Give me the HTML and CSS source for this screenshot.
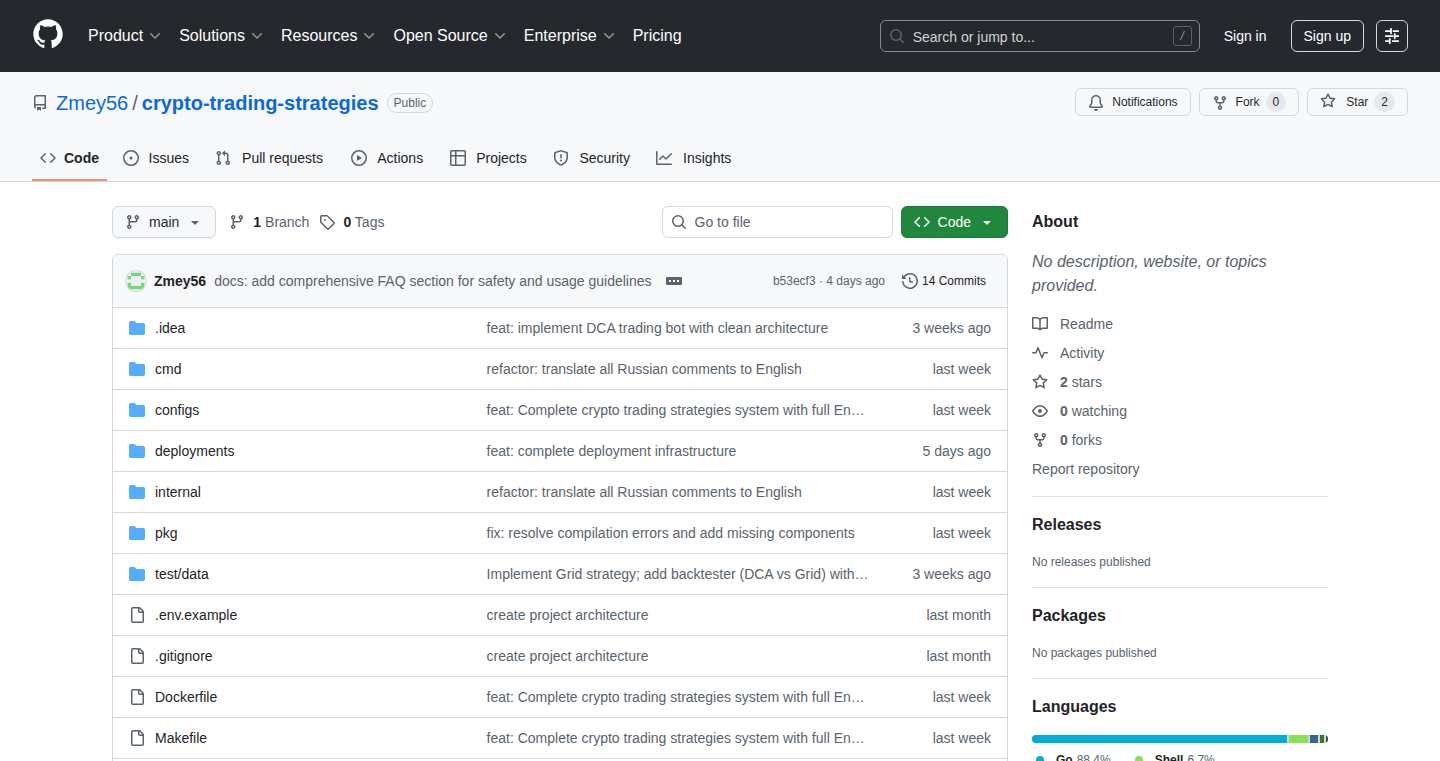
FILE: index.html
```html
<!DOCTYPE html>
<html lang="en">
<head>
<meta charset="utf-8">
<meta name="viewport" content="width=device-width, initial-scale=1">
<title>Zmey56/crypto-trading-strategies</title>
<link rel="stylesheet" href="styles.css">
</head>
<body>
<svg class="sprite" aria-hidden="true">
  <symbol id="i-mark" viewBox="0 0 24 24"><path d="M12 1C5.9225 1 1 5.9225 1 12C1 16.8675 4.14875 20.9787 8.52125 22.4362C9.07125 22.5325 9.2775 22.2025 9.2775 21.9137C9.2775 21.6525 9.26375 20.7862 9.26375 19.865C6.5 20.3737 5.785 19.1912 5.565 18.5725C5.44125 18.2562 4.905 17.28 4.4375 17.0187C4.0525 16.8125 3.5025 16.3037 4.42375 16.29C5.29 16.2762 5.90875 17.0875 6.115 17.4175C7.105 19.0812 8.68625 18.6137 9.31875 18.325C9.415 17.61 9.70375 17.1287 10.02 16.8537C7.5725 16.5787 5.015 15.63 5.015 11.4225C5.015 10.2262 5.44125 9.23625 6.1425 8.46625C6.0325 8.19125 5.6475 7.06375 6.2525 5.55125C6.2525 5.55125 7.17375 5.2625 9.2775 6.67875C10.1575 6.43125 11.0925 6.3075 12.0275 6.3075C12.9625 6.3075 13.8975 6.43125 14.7775 6.67875C16.8813 5.24875 17.8025 5.55125 17.8025 5.55125C18.4075 7.06375 18.0225 8.19125 17.9125 8.46625C18.6138 9.23625 19.04 10.2125 19.04 11.4225C19.04 15.6437 16.4688 16.5787 14.0213 16.8537C14.42 17.1975 14.7638 17.8575 14.7638 18.8887C14.7638 20.36 14.75 21.5425 14.75 21.9137C14.75 22.2025 14.9563 22.5462 15.5063 22.4362C19.8513 20.9787 23 16.8537 23 12C23 5.9225 18.0775 1 12 1Z"/></symbol>
  <symbol id="i-chevron" viewBox="0 0 16 16"><path d="M12.78 5.22a.749.749 0 0 1 0 1.06l-4.25 4.25a.749.749 0 0 1-1.06 0L3.22 6.28a.749.749 0 1 1 1.06-1.06L8 8.939l3.72-3.719a.749.749 0 0 1 1.06 0Z"/></symbol>
  <symbol id="i-search" viewBox="0 0 16 16"><path d="M10.68 11.74a6 6 0 0 1-7.922-8.982 6 6 0 0 1 8.982 7.922l3.04 3.04a.749.749 0 0 1-.326 1.275.749.749 0 0 1-.734-.215ZM11.5 7a4.499 4.499 0 1 0-8.997 0A4.499 4.499 0 0 0 11.5 7Z"/></symbol>
  <symbol id="i-sliders" viewBox="0 0 16 16"><path d="M1.75 3h4.5M7 .75v4.5M9.5 3h4.75M1.75 8h7M10.75 5.75v4.5M11 8h3.25M1.75 13h2.5M5.75 10.75v4.5M8.75 13h5.5" fill="none" stroke="currentColor" stroke-width="1.75" stroke-linecap="round"/></symbol>
  <symbol id="i-repo" viewBox="0 0 16 16"><path d="M2 2.5A2.5 2.5 0 0 1 4.5 0h8.75a.75.75 0 0 1 .75.75v12.5a.75.75 0 0 1-.75.75h-2.5a.75.75 0 0 1 0-1.5h1.75v-2h-8a1 1 0 0 0-.714 1.7.75.75 0 1 1-1.072 1.05A2.495 2.495 0 0 1 2 11.5Zm10.5-1h-8a1 1 0 0 0-1 1v6.708A2.486 2.486 0 0 1 4.5 9h8ZM5 12.25a.25.25 0 0 1 .25-.25h3.5a.25.25 0 0 1 .25.25v3.25a.25.25 0 0 1-.4.2l-1.45-1.087a.249.249 0 0 0-.3 0L5.4 15.7a.25.25 0 0 1-.4-.2Z"/></symbol>
  <symbol id="i-code" viewBox="0 0 16 16"><path d="m11.28 3.22 4.25 4.25a.75.75 0 0 1 0 1.06l-4.25 4.25a.749.749 0 0 1-1.275-.326.749.749 0 0 1 .215-.734L13.94 8l-3.72-3.72a.749.749 0 0 1 .326-1.275.749.749 0 0 1 .734.215Zm-6.56 0a.751.751 0 0 1 1.042.018.751.751 0 0 1 .018 1.042L2.06 8l3.72 3.72a.749.749 0 0 1-.326 1.275.749.749 0 0 1-.734-.215L.47 8.53a.75.75 0 0 1 0-1.06Z"/></symbol>
  <symbol id="i-issue" viewBox="0 0 16 16"><path d="M8 9.5a1.5 1.5 0 1 0 0-3 1.5 1.5 0 0 0 0 3Z"/><path d="M8 0a8 8 0 1 1 0 16A8 8 0 0 1 8 0ZM1.5 8a6.5 6.5 0 1 0 13 0 6.5 6.5 0 0 0-13 0Z"/></symbol>
  <symbol id="i-pr" viewBox="0 0 16 16"><path d="M1.5 3.25a2.25 2.25 0 1 1 3 2.122v5.256a2.251 2.251 0 1 1-1.5 0V5.372A2.25 2.25 0 0 1 1.5 3.25Zm5.677-.177L9.573.677A.25.25 0 0 1 10 .854V2.5h1A2.5 2.5 0 0 1 13.5 5v5.628a2.251 2.251 0 1 1-1.5 0V5a1 1 0 0 0-1-1h-1v1.646a.25.25 0 0 1-.427.177L7.177 3.427a.25.25 0 0 1 0-.354ZM3.75 2.5a.75.75 0 1 0 0 1.5.75.75 0 0 0 0-1.5Zm0 9.5a.75.75 0 1 0 0 1.5.75.75 0 0 0 0-1.5Zm8.25.75a.75.75 0 1 0 1.5 0 .75.75 0 0 0-1.5 0Z"/></symbol>
  <symbol id="i-play" viewBox="0 0 16 16"><path d="M8 0a8 8 0 1 1 0 16A8 8 0 0 1 8 0ZM1.5 8a6.5 6.5 0 1 0 13 0 6.5 6.5 0 0 0-13 0Zm4.879-2.773 4.264 2.559a.25.25 0 0 1 0 .428l-4.264 2.559A.25.25 0 0 1 6 10.559V5.442a.25.25 0 0 1 .379-.215Z"/></symbol>
  <symbol id="i-table" viewBox="0 0 16 16"><path d="M0 1.75C0 .784.784 0 1.75 0h12.5C15.216 0 16 .784 16 1.75v12.5A1.75 1.75 0 0 1 14.25 16H1.75A1.75 1.75 0 0 1 0 14.25ZM6.5 6.5v8h7.75a.25.25 0 0 0 .25-.25V6.5Zm8-1.5V1.75a.25.25 0 0 0-.25-.25H6.5V5Zm-13 1.5v7.75c0 .138.112.25.25.25H5v-8ZM5 5V1.5H1.75a.25.25 0 0 0-.25.25V5Z"/></symbol>
  <symbol id="i-shield" viewBox="0 0 16 16"><path d="M7.467.133a1.748 1.748 0 0 1 1.066 0l5.25 1.68A1.75 1.75 0 0 1 15 3.48V7c0 1.566-.32 3.182-1.303 4.682-.983 1.498-2.585 2.813-5.032 3.855a1.697 1.697 0 0 1-1.33 0c-2.447-1.042-4.049-2.357-5.032-3.855C1.32 10.182 1 8.566 1 7V3.48a1.755 1.755 0 0 1 1.217-1.667Zm.61 1.429a.25.25 0 0 0-.153 0l-5.25 1.68a.25.25 0 0 0-.174.238V7c0 1.358.275 2.666 1.057 3.86.784 1.194 2.121 2.34 4.366 3.297a.196.196 0 0 0 .154 0c2.245-.956 3.582-2.104 4.366-3.298C13.225 9.666 13.5 8.36 13.5 7V3.48a.251.251 0 0 0-.174-.237l-5.25-1.68ZM8.75 4.75v3a.75.75 0 0 1-1.5 0v-3a.75.75 0 0 1 1.5 0ZM9 10.5a1 1 0 1 1-2 0 1 1 0 0 1 2 0Z"/></symbol>
  <symbol id="i-graph" viewBox="0 0 16 16"><path d="M1.5 1.75V13.5h13.75a.75.75 0 0 1 0 1.5H.75a.75.75 0 0 1-.75-.75V1.75a.75.75 0 0 1 1.5 0Zm14.28 2.53-5.25 5.25a.75.75 0 0 1-1.06 0L7 7.06 4.28 9.78a.751.751 0 0 1-1.042-.018.751.751 0 0 1-.018-1.042l3.25-3.25a.75.75 0 0 1 1.06 0L10 7.94l4.72-4.72a.751.751 0 0 1 1.042.018.751.751 0 0 1 .018 1.042Z"/></symbol>
  <symbol id="i-bell" viewBox="0 0 16 16"><path d="M8 16a2 2 0 0 0 1.985-1.75c.017-.137-.097-.25-.235-.25h-3.5c-.138 0-.252.113-.235.25A2 2 0 0 0 8 16ZM3 5a5 5 0 0 1 10 0v2.947c0 .05.015.098.042.139l1.703 2.555A1.519 1.519 0 0 1 13.482 13H2.518a1.516 1.516 0 0 1-1.263-2.36l1.703-2.554A.255.255 0 0 0 3 7.947Zm5-3.5A3.5 3.5 0 0 0 4.5 5v2.947c0 .346-.102.683-.294.97l-1.703 2.556a.017.017 0 0 0-.003.01l.001.006c0 .002.002.004.004.006l.006.004.007.001h10.964l.007-.001.006-.004.004-.006.001-.007a.017.017 0 0 0-.003-.01l-1.703-2.554a1.745 1.745 0 0 1-.294-.97V5A3.5 3.5 0 0 0 8 1.5Z"/></symbol>
  <symbol id="i-fork" viewBox="0 0 16 16"><path d="M5 5.372v.878c0 .414.336.75.75.75h4.5a.75.75 0 0 0 .75-.75v-.878a2.25 2.25 0 1 1 1.5 0v.878a2.25 2.25 0 0 1-2.25 2.25h-1.5v2.128a2.251 2.251 0 1 1-1.5 0V8.5h-1.5A2.25 2.25 0 0 1 3.5 6.25v-.878a2.25 2.25 0 1 1 1.5 0ZM5 3.25a.75.75 0 1 0-1.5 0 .75.75 0 0 0 1.5 0Zm6.75.75a.75.75 0 1 0 0-1.5.75.75 0 0 0 0 1.5Zm-3 8.75a.75.75 0 1 0-1.5 0 .75.75 0 0 0 1.5 0Z"/></symbol>
  <symbol id="i-star" viewBox="0 0 16 16"><path d="M8 .25a.75.75 0 0 1 .673.418l1.882 3.815 4.21.612a.75.75 0 0 1 .416 1.279l-3.046 2.97.719 4.192a.751.751 0 0 1-1.088.791L8 12.347l-3.766 1.98a.75.75 0 0 1-1.088-.79l.72-4.194L.818 6.374a.75.75 0 0 1 .416-1.28l4.21-.611L7.327.668A.75.75 0 0 1 8 .25Zm0 2.445L6.615 5.5a.75.75 0 0 1-.564.41l-3.097.45 2.24 2.184a.75.75 0 0 1 .216.664l-.528 3.084 2.769-1.456a.75.75 0 0 1 .698 0l2.77 1.456-.53-3.084a.75.75 0 0 1 .216-.664l2.24-2.183-3.096-.45a.75.75 0 0 1-.564-.41L8 2.694Z"/></symbol>
  <symbol id="i-branch" viewBox="0 0 16 16"><path d="M9.5 3.25a2.25 2.25 0 1 1 3 2.122V6A2.5 2.5 0 0 1 10 8.5H6a1 1 0 0 0-1 1v1.128a2.251 2.251 0 1 1-1.5 0V5.372a2.25 2.25 0 1 1 1.5 0v1.836A2.493 2.493 0 0 1 6 7h4a1 1 0 0 0 1-1v-.628A2.25 2.25 0 0 1 9.5 3.25Zm-6 0a.75.75 0 1 0 1.5 0 .75.75 0 0 0-1.5 0Zm8.25-.75a.75.75 0 1 0 0 1.5.75.75 0 0 0 0-1.5ZM4.25 12a.75.75 0 1 0 0 1.5.75.75 0 0 0 0-1.5Z"/></symbol>
  <symbol id="i-caret" viewBox="0 0 16 16"><path d="m4.427 7.427 3.396 3.396a.25.25 0 0 0 .354 0l3.396-3.396A.25.25 0 0 0 11.396 7H4.604a.25.25 0 0 0-.177.427Z"/></symbol>
  <symbol id="i-tag" viewBox="0 0 16 16"><path d="M1 7.775V2.75C1 1.784 1.784 1 2.75 1h5.025c.464 0 .91.184 1.238.513l6.25 6.25a1.75 1.75 0 0 1 0 2.474l-5.026 5.026a1.75 1.75 0 0 1-2.474 0l-6.25-6.25A1.752 1.752 0 0 1 1 7.775Zm1.5 0c0 .066.026.13.073.177l6.25 6.25a.25.25 0 0 0 .354 0l5.025-5.025a.25.25 0 0 0 0-.354l-6.25-6.25a.25.25 0 0 0-.177-.073H2.75a.25.25 0 0 0-.25.25ZM6 5a1 1 0 1 1 0 2 1 1 0 0 1 0-2Z"/></symbol>
  <symbol id="i-ellipsis" viewBox="0 0 16 16"><path fill-rule="evenodd" d="M1 4h14a1 1 0 0 1 1 1v6a1 1 0 0 1-1 1H1a1 1 0 0 1-1-1V5a1 1 0 0 1 1-1Zm2 3v2h2V7Zm4 0v2h2V7Zm4 0v2h2V7Z"/></symbol>
  <symbol id="i-history" viewBox="0 0 16 16"><path d="m.427 1.927 1.215 1.215a8.002 8.002 0 1 1-1.6 5.685.75.75 0 1 1 1.493-.154 6.5 6.5 0 1 0 1.18-4.458l1.358 1.358A.25.25 0 0 1 3.896 6H.25A.25.25 0 0 1 0 5.75V2.104a.25.25 0 0 1 .427-.177ZM7.75 4a.75.75 0 0 1 .75.75v2.992l2.028.812a.75.75 0 0 1-.557 1.392l-2.5-1A.751.751 0 0 1 7 8.25v-3.5A.75.75 0 0 1 7.75 4Z"/></symbol>
  <symbol id="i-folder" viewBox="0 0 16 16"><path d="M1.75 1A1.75 1.75 0 0 0 0 2.75v10.5C0 14.216.784 15 1.75 15h12.5A1.75 1.75 0 0 0 16 13.25v-8.5A1.75 1.75 0 0 0 14.25 3H7.5a.25.25 0 0 1-.2-.1l-.9-1.2C6.07 1.26 5.55 1 5 1H1.75Z"/></symbol>
  <symbol id="i-file" viewBox="0 0 16 16"><path d="M2 1.75C2 .784 2.784 0 3.75 0h6.586c.464 0 .909.184 1.237.513l2.914 2.914c.329.328.513.773.513 1.237v9.586A1.75 1.75 0 0 1 13.25 16h-9.5A1.75 1.75 0 0 1 2 14.25Zm1.75-.25a.25.25 0 0 0-.25.25v12.5c0 .138.112.25.25.25h9.5a.25.25 0 0 0 .25-.25V6h-2.75A1.75 1.75 0 0 1 9 4.25V1.5Zm6.75.062V4.25c0 .138.112.25.25.25h2.688l-.011-.013-2.914-2.914-.013-.011Z"/></symbol>
  <symbol id="i-book" viewBox="0 0 16 16"><path d="M0 1.75A.75.75 0 0 1 .75 1h4.253c1.227 0 2.317.59 3 1.501A3.743 3.743 0 0 1 11.006 1h4.245a.75.75 0 0 1 .75.75v10.5a.75.75 0 0 1-.75.75h-4.507a2.25 2.25 0 0 0-1.591.659l-.622.621a.75.75 0 0 1-1.06 0l-.622-.621A2.25 2.25 0 0 0 5.258 13H.75a.75.75 0 0 1-.75-.75Zm7.251 10.324.004-5.073-.002-2.253A2.25 2.25 0 0 0 5.003 2.5H1.5v9h3.757a3.75 3.75 0 0 1 1.994.574ZM8.755 4.75l-.004 7.322a3.752 3.752 0 0 1 1.992-.572H14.5v-9h-3.495a2.25 2.25 0 0 0-2.25 2.25Z"/></symbol>
  <symbol id="i-pulse" viewBox="0 0 16 16"><path d="M6 2c.306 0 .582.187.696.471L10 10.731l1.304-3.26A.751.751 0 0 1 12 7h3.25a.75.75 0 0 1 0 1.5h-2.742l-1.812 4.528a.751.751 0 0 1-1.392 0L6 4.77 4.696 8.03A.75.75 0 0 1 4 8.5H.75a.75.75 0 0 1 0-1.5h2.742l1.812-4.529A.751.751 0 0 1 6 2Z"/></symbol>
  <symbol id="i-eye" viewBox="0 0 16 16"><path d="M8 2c1.981 0 3.671.992 4.933 2.078 1.27 1.091 2.187 2.345 2.637 3.023a1.62 1.62 0 0 1 0 1.798c-.45.678-1.367 1.932-2.637 3.023C11.67 13.008 9.981 14 8 14c-1.981 0-3.671-.992-4.933-2.078C1.797 10.83.88 9.576.43 8.898a1.62 1.62 0 0 1 0-1.798c.45-.677 1.367-1.931 2.637-3.022C4.33 2.992 6.019 2 8 2ZM1.679 7.932a.12.12 0 0 0 0 .136c.411.622 1.241 1.75 2.366 2.717C5.176 11.758 6.527 12.5 8 12.5c1.473 0 2.825-.742 3.955-1.715 1.124-.967 1.954-2.096 2.366-2.717a.12.12 0 0 0 0-.136c-.412-.621-1.242-1.75-2.366-2.717C10.824 4.242 9.473 3.5 8 3.5c-1.473 0-2.825.742-3.955 1.715-1.124.967-1.954 2.096-2.366 2.717ZM8 10a2 2 0 1 1-.001-3.999A2 2 0 0 1 8 10Z"/></symbol>
  <symbol id="i-dot" viewBox="0 0 16 16"><path d="M8 4a4 4 0 1 1 0 8 4 4 0 0 1 0-8Z"/></symbol>
</svg>

<div class="app">
  <header class="topbar">
    <a class="logo" href="#" aria-label="Homepage"><svg class="mark"><use href="#i-mark"/></svg></a>
    <nav class="topnav" aria-label="Global">
      <button type="button">Product <svg class="icon"><use href="#i-chevron"/></svg></button>
      <button type="button">Solutions <svg class="icon"><use href="#i-chevron"/></svg></button>
      <button type="button">Resources <svg class="icon"><use href="#i-chevron"/></svg></button>
      <button type="button">Open Source <svg class="icon"><use href="#i-chevron"/></svg></button>
      <button type="button">Enterprise <svg class="icon"><use href="#i-chevron"/></svg></button>
      <a href="#">Pricing</a>
    </nav>
    <button type="button" class="jump"><svg class="icon"><use href="#i-search"/></svg><span class="jump-text">Search or jump to...</span><kbd>/</kbd></button>
    <a class="sign-in" href="#">Sign in</a>
    <div class="top-actions">
      <a class="outline" href="#">Sign up</a>
      <button type="button" class="outline square" aria-label="Appearance settings"><svg class="icon"><use href="#i-sliders"/></svg></button>
    </div>
  </header>

  <section class="repo-head">
    <div class="title-row">
      <div class="title">
        <svg class="icon"><use href="#i-repo"/></svg>
        <h1><a href="#">Zmey56</a><span class="slash">/</span><a class="repo-name" href="#">crypto-trading-strategies</a></h1>
        <span class="label">Public</span>
      </div>
      <div class="repo-actions">
        <a class="btn-sm" href="#"><svg class="icon"><use href="#i-bell"/></svg>Notifications</a>
        <a class="btn-sm" href="#"><svg class="icon"><use href="#i-fork"/></svg>Fork <span class="counter">0</span></a>
        <a class="btn-sm btn-star" href="#"><svg class="icon"><use href="#i-star"/></svg>Star <span class="counter">2</span></a>
      </div>
    </div>
    <nav class="tabs" aria-label="Repository">
      <a class="current" href="#" aria-current="page"><svg class="icon"><use href="#i-code"/></svg><span data-content="Code">Code</span></a>
      <a href="#"><svg class="icon"><use href="#i-issue"/></svg><span data-content="Issues">Issues</span></a>
      <a href="#"><svg class="icon"><use href="#i-pr"/></svg><span data-content="Pull requests">Pull requests</span></a>
      <a href="#"><svg class="icon"><use href="#i-play"/></svg><span data-content="Actions">Actions</span></a>
      <a href="#"><svg class="icon"><use href="#i-table"/></svg><span data-content="Projects">Projects</span></a>
      <a href="#"><svg class="icon"><use href="#i-shield"/></svg><span data-content="Security">Security</span></a>
      <a href="#"><svg class="icon"><use href="#i-graph"/></svg><span data-content="Insights">Insights</span></a>
    </nav>
  </section>

  <div class="layout">
    <main>
      <div class="toolbar">
        <button type="button" class="btn"><svg class="icon"><use href="#i-branch"/></svg>main<svg class="icon"><use href="#i-caret"/></svg></button>
        <div class="refs">
          <a href="#"><svg class="icon"><use href="#i-branch"/></svg><span><strong>1</strong> Branch</span></a>
          <a href="#"><svg class="icon"><use href="#i-tag"/></svg><span><strong>0</strong> Tags</span></a>
        </div>
        <label class="find"><svg class="icon"><use href="#i-search"/></svg><input type="text" placeholder="Go to file" aria-label="Go to file"></label>
        <button type="button" class="btn primary"><svg class="icon"><use href="#i-code"/></svg>Code<svg class="icon"><use href="#i-caret"/></svg></button>
      </div>

      <div class="files">
        <table>
          <colgroup><col class="col-name"><col><col class="col-date"></colgroup>
          <thead>
            <tr><th colspan="3">
              <div class="commit">
                <svg class="avatar" viewBox="0 0 24 24" role="img" aria-label="Zmey56"><circle cx="12" cy="12" r="12" fill="#f0f0f0"/><path fill="#72d978" d="M6 2h12v4H6zM2 6h4v4H2zM18 6h4v4h-4zM2 14h4v4h12v-4h4v8H2z"/></svg>
                <a class="author" href="#">Zmey56</a>
                <a class="commit-msg" href="#">docs: add comprehensive FAQ section for safety and usage guidelines</a>
                <button type="button" class="more" aria-label="Open commit details"><svg class="icon"><use href="#i-ellipsis"/></svg></button>
                <span class="sha">b53ecf3 · 4 days ago</span>
                <a class="history" href="#"><svg class="icon"><use href="#i-history"/></svg>14 Commits</a>
              </div>
            </th></tr>
          </thead>
          <tbody>
            <tr><td><a class="name dir" href="#"><svg class="icon"><use href="#i-folder"/></svg>.idea</a></td><td class="msg"><a href="#">feat: implement DCA trading bot with clean architecture</a></td><td class="date">3 weeks ago</td></tr>
            <tr><td><a class="name dir" href="#"><svg class="icon"><use href="#i-folder"/></svg>cmd</a></td><td class="msg"><a href="#">refactor: translate all Russian comments to English</a></td><td class="date">last week</td></tr>
            <tr><td><a class="name dir" href="#"><svg class="icon"><use href="#i-folder"/></svg>configs</a></td><td class="msg"><a href="#">feat: Complete crypto trading strategies system with full English</a></td><td class="date">last week</td></tr>
            <tr><td><a class="name dir" href="#"><svg class="icon"><use href="#i-folder"/></svg>deployments</a></td><td class="msg"><a href="#">feat: complete deployment infrastructure</a></td><td class="date">5 days ago</td></tr>
            <tr><td><a class="name dir" href="#"><svg class="icon"><use href="#i-folder"/></svg>internal</a></td><td class="msg"><a href="#">refactor: translate all Russian comments to English</a></td><td class="date">last week</td></tr>
            <tr><td><a class="name dir" href="#"><svg class="icon"><use href="#i-folder"/></svg>pkg</a></td><td class="msg"><a href="#">fix: resolve compilation errors and add missing components</a></td><td class="date">last week</td></tr>
            <tr><td><a class="name dir" href="#"><svg class="icon"><use href="#i-folder"/></svg>test/data</a></td><td class="msg"><a href="#">Implement Grid strategy; add backtester (DCA vs Grid) with CSV</a></td><td class="date">3 weeks ago</td></tr>
            <tr><td><a class="name" href="#"><svg class="icon"><use href="#i-file"/></svg>.env.example</a></td><td class="msg"><a href="#">create project architecture</a></td><td class="date">last month</td></tr>
            <tr><td><a class="name" href="#"><svg class="icon"><use href="#i-file"/></svg>.gitignore</a></td><td class="msg"><a href="#">create project architecture</a></td><td class="date">last month</td></tr>
            <tr><td><a class="name" href="#"><svg class="icon"><use href="#i-file"/></svg>Dockerfile</a></td><td class="msg"><a href="#">feat: Complete crypto trading strategies system with full English</a></td><td class="date">last week</td></tr>
            <tr><td><a class="name" href="#"><svg class="icon"><use href="#i-file"/></svg>Makefile</a></td><td class="msg"><a href="#">feat: Complete crypto trading strategies system with full English</a></td><td class="date">last week</td></tr>
            <tr><td></td><td></td><td></td></tr>
          </tbody>
        </table>
      </div>
    </main>

    <aside class="sidebar">
      <section>
        <h2>About</h2>
        <p class="description">No description, website, or topics provided.</p>
        <ul class="facts">
          <li><a href="#"><svg class="icon"><use href="#i-book"/></svg><span>Readme</span></a></li>
          <li><a href="#"><svg class="icon"><use href="#i-pulse"/></svg><span>Activity</span></a></li>
          <li><a href="#"><svg class="icon"><use href="#i-star"/></svg><span><strong>2</strong> stars</span></a></li>
          <li><a href="#"><svg class="icon"><use href="#i-eye"/></svg><span><strong>0</strong> watching</span></a></li>
          <li><a href="#"><svg class="icon"><use href="#i-fork"/></svg><span><strong>0</strong> forks</span></a></li>
          <li><a href="#">Report repository</a></li>
        </ul>
      </section>
      <section>
        <h2>Releases</h2>
        <p class="note">No releases published</p>
      </section>
      <section>
        <h2>Packages</h2>
        <p class="note">No packages published</p>
      </section>
      <section>
        <h2>Languages</h2>
        <div class="langbar">
          <span class="go" style="width:88.4%"></span>
          <span class="shell" style="width:6.7%"></span>
          <span class="sql" style="width:2.9%"></span>
          <span class="make" style="width:1.4%"></span>
          <span class="docker" style="width:0.6%"></span>
        </div>
        <ul class="legend">
          <li><svg class="icon go-dot"><use href="#i-dot"/></svg><strong>Go</strong><span>88.4%</span></li>
          <li><svg class="icon shell-dot"><use href="#i-dot"/></svg><strong>Shell</strong><span>6.7%</span></li>
        </ul>
      </section>
    </aside>
  </div>
</div>
</body>
</html>
```

FILE: styles.css
```css
:root {
  --fg: #1f2328;
  --muted: #59636e;
  --border: #d1d9e0;
  --subtle: #f6f8fa;
  --link: #0969da;
}

* { box-sizing: border-box; }

body {
  margin: 0;
  color: var(--fg);
  background: #fff;
  font-family: "Liberation Sans", Arial, sans-serif;
  font-size: 14px;
  line-height: 21px;
}

a { color: inherit; text-decoration: none; }
button, input { font: inherit; color: inherit; }
button { cursor: pointer; background: none; border: 0; padding: 0; }
h1, h2, p, ul { margin: 0; padding: 0; }
ul { list-style: none; }

.sprite { position: absolute; width: 0; height: 0; }
.icon { width: 16px; height: 16px; flex: none; fill: currentColor; }

.app { height: 100vh; overflow: auto; scrollbar-width: none; }

/* Global header */
.topbar {
  display: flex;
  align-items: center;
  min-height: 72px;
  padding: 0 32px;
  color: #fff;
  background: #25292e;
}
.logo { display: flex; padding-bottom: 4px; }
.mark { width: 32px; height: 32px; fill: #fff; }
.topnav {
  display: flex;
  flex: 1;
  gap: 16px;
  margin-left: 24px;
  font-size: 16px;
  line-height: 24px;
}
.topnav button { display: flex; align-items: center; gap: 4px; white-space: nowrap; }
.topnav .icon { color: #fff; opacity: 0.5; }
.jump {
  display: flex;
  align-items: center;
  gap: 8px;
  width: 320px;
  height: 32px;
  padding: 0 7px 0 8px;
  color: #d1d3d5;
  border: 1px solid #818b98;
  border-radius: 6px;
}
.jump .icon { color: #59636e; }
.jump-text { flex: 1; padding-top: 2px; text-align: left; }
.jump kbd {
  width: 19px;
  height: 20px;
  font: italic 12px/18px "Liberation Sans", Arial, sans-serif;
  color: #9198a1;
  border: 1px solid #59636e;
  border-radius: 3px;
}
.sign-in { margin: 0 24px; }
.top-actions { display: flex; gap: 12px; }
.outline {
  display: flex;
  align-items: center;
  justify-content: center;
  height: 32px;
  padding: 0 12px;
  border: 1px solid #d1d9e0;
  border-radius: 6px;
}
.square { width: 32px; padding: 0; }

/* Repository header */
.repo-head {
  padding: 16px 32px 0;
  background: var(--subtle);
  border-bottom: 1px solid var(--border);
}
.title-row { display: flex; justify-content: space-between; align-items: flex-start; }
.title { display: flex; align-items: center; gap: 8px; color: var(--muted); }
.title h1 { font-size: 20px; line-height: 30px; font-weight: 400; }
.title h1 a { color: var(--link); }
.title .repo-name { font-weight: 700; }
.slash { margin: 0 4px; }
.label {
  padding: 0 6px;
  font-size: 12px;
  line-height: 18px;
  border: 1px solid var(--border);
  border-radius: 10px;
}
.repo-actions { display: flex; gap: 8px; }
.btn-sm {
  display: flex;
  align-items: center;
  height: 28px;
  padding: 0 12px;
  font-size: 12px;
  color: #25292e;
  background: var(--subtle);
  border: 1px solid var(--border);
  border-radius: 6px;
}
.btn-sm .icon { margin: 2px 8px 0 0; color: var(--muted); }
.btn-star .icon { margin: 0 10px 2px 0; }
.counter {
  min-width: 20px;
  margin-left: 6px;
  padding: 0 7px;
  line-height: 20px;
  text-align: center;
  background: #e6e8eb;
  border-radius: 10px;
}
.tabs { display: flex; gap: 8px; padding-top: 16px; }
.tabs a {
  display: flex;
  align-items: center;
  gap: 8px;
  height: 47px;
  padding: 3px 8px 0;
  border-bottom: 2px solid transparent;
}
.tabs .icon { color: var(--muted); }
.tabs span { text-align: center; }
.tabs span::before {
  content: attr(data-content);
  display: block;
  height: 0;
  font-weight: 700;
  visibility: hidden;
}
.tabs .current { font-weight: 700; border-bottom-color: #fd8c73; }

/* Content */
.layout {
  display: grid;
  grid-template-columns: minmax(0, 1fr) 296px;
  gap: 24px;
  max-width: 1280px;
  margin: 0 auto;
  padding: 24px 32px;
}

.toolbar { display: flex; align-items: center; gap: 8px; }
.btn {
  display: flex;
  align-items: center;
  gap: 8px;
  height: 32px;
  padding: 0 12px;
  color: #25292e;
  background: var(--subtle);
  border: 1px solid var(--border);
  border-radius: 6px;
  box-shadow: 0 1px 0 #1f23280a;
}
.btn .icon { color: var(--muted); }
.primary { color: #fff; background: #1f883d; border-color: #1f783a; }
.primary .icon { color: #fff; }
.refs { display: flex; flex: 1; gap: 10px; padding-left: 5px; color: var(--muted); }
.refs a { display: flex; align-items: center; gap: 8px; }
.refs strong { color: var(--fg); }
.find {
  display: flex;
  align-items: center;
  gap: 8px;
  width: 231px;
  height: 32px;
  padding: 0 8px;
  color: var(--muted);
  border: 1px solid var(--border);
  border-radius: 6px;
}
.find input { width: 100%; min-width: 0; padding: 0; border: 0; outline: 0; background: none; }
.find input::placeholder { color: var(--muted); opacity: 1; }

.files {
  margin-top: 16px;
  overflow: hidden;
  border: 1px solid var(--border);
  border-radius: 6px;
}
.files table { width: 100%; table-layout: fixed; border-collapse: collapse; }
.col-name { width: 40%; }
.col-date { width: 136px; }
.files th { padding: 0; font-weight: 400; text-align: left; background: var(--subtle); }
.commit { display: flex; align-items: center; height: 52px; padding: 0 21px 0 13px; }
.avatar { width: 20px; height: 20px; flex: none; border-radius: 50%; box-shadow: 0 0 0 1px #1f232826; }
.author { margin: 0 8px; font-weight: 700; }
.commit-msg { color: var(--muted); }
.more { display: flex; margin: 0 auto 0 14px; color: var(--muted); }
.sha { font-size: 12px; color: var(--muted); }
.history { display: flex; align-items: center; gap: 4px; margin-left: 17px; font-size: 12px; }
.history .icon { color: var(--muted); }
.files td { height: 41px; padding: 0 0 0 16px; border-top: 1px solid var(--border); }
.name { display: flex; align-items: center; gap: 10px; }
.name .icon { color: var(--muted); }
.dir .icon { color: #54aeff; }
.msg { overflow: hidden; color: var(--muted); white-space: nowrap; text-overflow: ellipsis; }
.files .date { padding-right: 16px; color: var(--muted); text-align: right; }

/* Sidebar */
.sidebar { padding-top: 4px; }
.sidebar section { padding-bottom: 16px; }
.sidebar section + section { padding-top: 16px; border-top: 1px solid #d1d9e0b3; }
.sidebar h2 { margin-bottom: 16px; font-size: 16px; line-height: 24px; }
.description { font-size: 16px; line-height: 24px; font-style: italic; color: var(--muted); }
.facts { display: grid; gap: 8px; margin-top: 16px; color: var(--muted); }
.facts a { display: flex; align-items: center; gap: 12px; }
.facts .icon { margin-bottom: 1px; }
.note { font-size: 12px; line-height: 18px; color: var(--muted); }
.langbar {
  display: flex;
  gap: 2px;
  height: 8px;
  overflow: hidden;
  background: var(--border);
  border-radius: 6px;
}
.go { background: #00add8; }
.shell { background: #89e051; }
.sql { background: #336790; }
.make { background: #427819; }
.docker { background: #384d54; }
.go-dot { color: #00add8; }
.shell-dot { color: #89e051; }
.legend { display: flex; gap: 20px; margin-top: 8px; font-size: 12px; line-height: 18px; color: var(--muted); }
.legend li { display: flex; align-items: center; gap: 4px; }
.legend .icon { margin-right: 4px; }
.legend strong { color: var(--fg); }
```
